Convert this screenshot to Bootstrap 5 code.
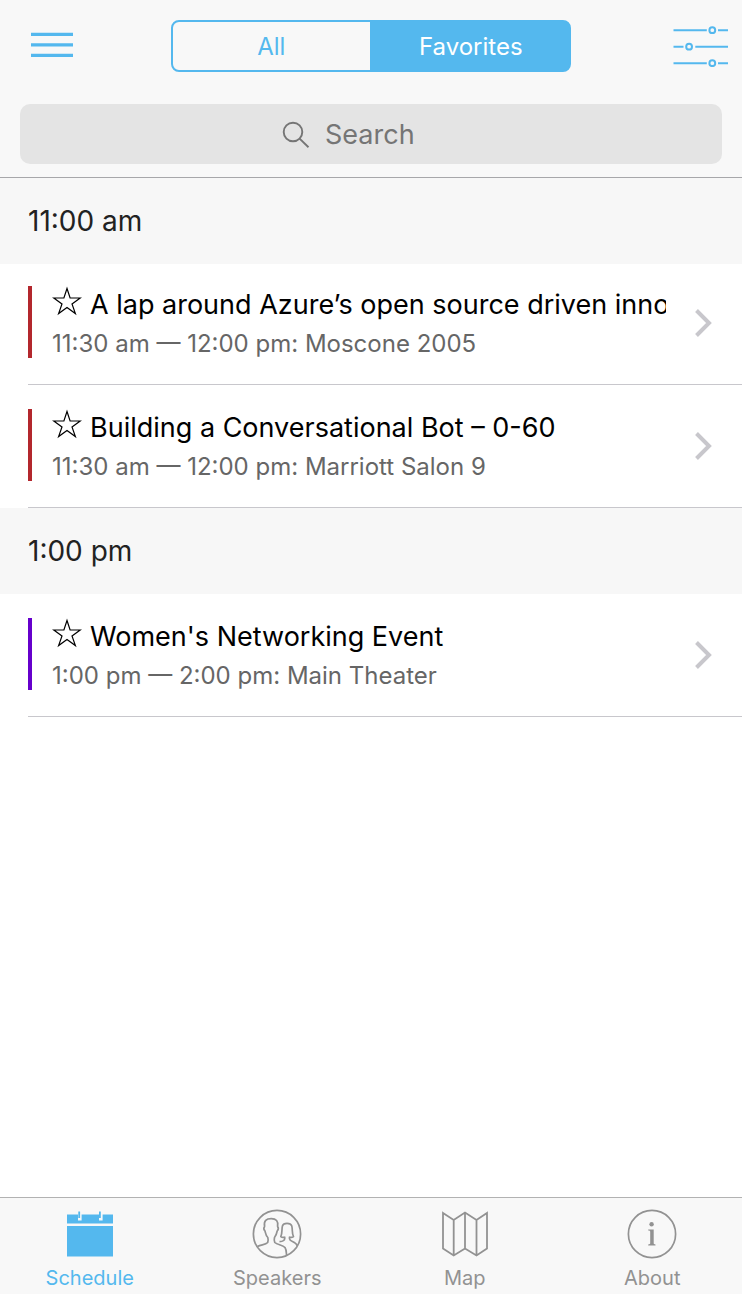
<!DOCTYPE html>
<html lang="en">
<head>
<meta charset="utf-8">
<meta name="viewport" content="width=device-width, initial-scale=1">
<title>Conference Schedule</title>
<link href="https://cdn.jsdelivr.net/npm/bootstrap@5.3.0/dist/css/bootstrap.min.css" rel="stylesheet">
<style>
  :root { --accent: #54b8ee; --bar: #f8f8f8; --icon-grey: #929292; }
  body { font-family: Inter, "Liberation Sans", sans-serif; color: #000; }
  svg { display: block; flex: none; }
  .topbar { background: var(--bar); border-bottom: 1px solid #a7a7aa; padding: 20px 20px 13px; margin-bottom: -2px; z-index: 3; }
  .toolbar { display: grid; grid-template-columns: 1fr 400px 1fr; margin-bottom: 32px; }
  .toolbar .btn { color: var(--accent); }
  .icon-menu { margin-left: 11px; }
  .icon-filter { margin-right: -6px; }
  .segments { height: 52px; }
  .segments .btn { --bs-btn-color: var(--accent); --bs-btn-border-color: var(--accent); --bs-btn-border-width: 2px;
    --bs-btn-active-bg: var(--accent); --bs-btn-active-border-color: var(--accent); --bs-btn-active-color: #fff;
    --bs-btn-border-radius: 8px; font-size: 24px; line-height: 28px; padding: 11px 0 9px; flex: 1 1 0; }
  .segments .btn-check:checked + .btn { color: #fff; }
  .searchbox .form-control { height: 60px; border: 0; border-radius: 10px; background: #e4e4e4; font-size: 27px; padding: 0 12px 0 calc(50% - 46px); color: #000; }
  .searchbox .form-control::placeholder { color: #757575; opacity: 1; }
  .searchbox svg { position: absolute; left: calc(50% - 90px); top: 16px; pointer-events: none; }
  .divider { position: sticky; top: 2px; z-index: 2; background: #f7f7f7; color: #222; font-size: 28px; line-height: 36px; padding: 25px 28px; font-weight: 400; }
  .sessions { padding-left: 28px; }
  .session { color: #000; padding: 24px 30px 24px 0; border-bottom: 1px solid #c8c7cc; }
  .session-text { border-left: 4px solid #b3272d; padding-left: 20px; height: 72px; margin: 0 28px 2px 0; }
  .session-text.social { border-color: #6600cc; }
  .session-title { font-size: 27px; line-height: 38px; gap: 8px; }
  .session-meta { font-size: 24px; line-height: 32px; color: #666; padding-top: 4px; }
  .tabs { background: var(--bar); border-top: 1px solid #b2b2b2; }
  .tabs .nav { margin: 0 -4px; }
  .tabs .nav-link { color: var(--icon-grey); font-size: 20px; line-height: 24px; padding: 11px 0 4px; gap: 7px; }
  .tabs .nav-link.active { color: var(--accent); }
</style>
</head>
<body class="vh-100 d-flex flex-column overflow-hidden bg-white">

<svg width="0" height="0" class="position-absolute" aria-hidden="true">
  <symbol id="star" viewBox="0 0 30 30"><path d="M15 2.5 18.1 12H28.2L20 17.9 23.4 27.6 15 21.6 6.6 27.6 10 17.9 1.8 12H11.9Z" fill="none" stroke="#000" stroke-width="1.2"/></symbol>
  <symbol id="chevron" viewBox="0 0 18 28"><path d="M2.5 1.5 15 14 2.5 26.5" fill="none" stroke="#c8c7cc" stroke-width="4"/></symbol>
</svg>

<header class="topbar position-relative">
  <div class="toolbar align-items-center">
    <button type="button" class="btn border-0 p-0 icon-menu text-start" aria-label="Menu">
      <svg width="42" height="28" viewBox="0 0 42 28" fill="currentColor"><path d="M0 .7h42v3.300H0zM0 11.200h42v3.300H0zM0 21.700h42v3.300H0z"/></svg>
    </button>
    <div class="btn-group segments" role="group" aria-label="Sessions shown">
      <input type="radio" class="btn-check" name="segment" id="seg-all">
      <label class="btn" for="seg-all">All</label>
      <input type="radio" class="btn-check" name="segment" id="seg-fav" checked>
      <label class="btn" for="seg-fav">Favorites</label>
    </div>
    <button type="button" class="btn border-0 p-0 icon-filter d-flex justify-content-end" aria-label="Filter">
      <svg width="55" height="42" viewBox="0 0 55 42" fill="none" stroke="currentColor" stroke-width="2"><path d="M.5 5.200h33.300M45 5.200h10M.5 21.700h10M22.300 21.700H55M.5 38.200h33.300M45 38.200h10"/><circle cx="39.300" cy="5.200" r="2.900"/><circle cx="16.100" cy="21.700" r="2.900"/><circle cx="39.300" cy="38.200" r="2.900"/></svg>
    </button>
  </div>
  <div class="searchbox position-relative">
    <svg width="30" height="30" viewBox="0 0 30 30" fill="none" stroke="#757575" stroke-width="1.9"><circle cx="12" cy="12" r="9.3"/><path d="M18.6 18.6 27.5 27.2"/></svg>
    <input type="search" class="form-control shadow-none" placeholder="Search" aria-label="Search">
  </div>
</header>

<main class="flex-grow-1 overflow-auto">
  <section>
    <h2 class="divider m-0">11:00 am</h2>
    <div class="sessions">
      <a href="#azure" class="session d-flex align-items-center text-decoration-none">
        <div class="session-text flex-grow-1 overflow-hidden">
          <div class="session-title d-flex text-nowrap"><svg width="30" height="30"><use href="#star"/></svg><span>A lap around Azure’s open source driven inno</span></div>
          <div class="session-meta">11:30 am — 12:00 pm: Moscone 2005</div>
        </div>
        <svg width="18" height="28"><use href="#chevron"/></svg>
      </a>
      <a href="#bot" class="session d-flex align-items-center text-decoration-none">
        <div class="session-text flex-grow-1 overflow-hidden">
          <div class="session-title d-flex text-nowrap"><svg width="30" height="30"><use href="#star"/></svg><span>Building a Conversational Bot – 0-60</span></div>
          <div class="session-meta">11:30 am — 12:00 pm: Marriott Salon 9</div>
        </div>
        <svg width="18" height="28"><use href="#chevron"/></svg>
      </a>
    </div>
  </section>
  <section>
    <h2 class="divider m-0">1:00 pm</h2>
    <div class="sessions">
      <a href="#networking" class="session d-flex align-items-center text-decoration-none">
        <div class="session-text social flex-grow-1 overflow-hidden">
          <div class="session-title d-flex text-nowrap"><svg width="30" height="30"><use href="#star"/></svg><span>Women's Networking Event</span></div>
          <div class="session-meta">1:00 pm — 2:00 pm: Main Theater</div>
        </div>
        <svg width="18" height="28"><use href="#chevron"/></svg>
      </a>
    </div>
  </section>
</main>

<footer class="tabs">
  <nav class="nav nav-fill flex-nowrap" aria-label="Main">
    <a class="nav-link active d-flex flex-column align-items-center w-25" href="#schedule" aria-current="page">
      <svg width="50" height="50" viewBox="0 0 50 50"><path d="M2 5.5H48V14.5H2ZM2 17H48V47.5H2Z" fill="currentColor"/><path d="M13 4h3.600v7.500H13zM34 4h3.600v7.500H34z" fill="#f8f8f8"/><path d="M13.300 2.500h1.800v6.500h-1.800zM34 2.500h1.800v6.500H34z" fill="currentColor"/></svg>
      Schedule
    </a>
    <a class="nav-link d-flex flex-column align-items-center w-25" href="#speakers">
      <svg width="50" height="50" viewBox="0 0 50 50" fill="none" stroke="currentColor" stroke-width="1.7" stroke-linejoin="round"><circle cx="25" cy="25" r="23.600"/><path d="M5.500 37.500C9 35.500 13.500 36 15.700 33.500 16.500 32 16.200 30 15.800 28.500 13.700 26.500 13.600 24.500 13 22 11.600 20.500 11.800 18.500 12.600 17.500 11.500 11.500 14.500 9.700 19.200 9.700 24.200 9.700 26.500 12 25.600 17.500 26.600 18.800 26.300 20.700 25.200 22 24.700 24.500 24.300 26.500 22.500 28.500 22 30.500 22 32 22.800 33.500 25.500 36 30.500 35.500 33 38.500 34.500 40.800 34.300 43.500 34.500 46"/><path d="M27.500 32.700C29.500 32.500 32.500 32 32.700 29.700V28.200C31.300 28.600 29.700 28.400 28.800 27.600 30.500 24.500 29.500 20 30.500 16.800 31.500 13.500 38.500 13.500 39.700 16.800 40.800 20 39.700 24.500 41.500 27.600 40.500 28.400 39 28.600 37.500 28.200V29.700C37.800 33.200 43.500 31.500 45.500 37"/></svg>
      Speakers
    </a>
    <a class="nav-link d-flex flex-column align-items-center w-25" href="#map">
      <svg width="50" height="50" viewBox="0 0 50 50" fill="none" stroke="currentColor" stroke-width="1.800"><path d="M3 4 13.700 11 25 3.500 36.500 11 47 4V39.500L36.500 46.500 25 39.500 13.700 46.500 3 39.500ZM13.700 11V46.500M25 3.500V39.500M36.500 11V46.500"/></svg>
      Map
    </a>
    <a class="nav-link d-flex flex-column align-items-center w-25" href="#about">
      <svg width="50" height="50" viewBox="0 0 50 50"><circle cx="25" cy="25" r="23.600" fill="none" stroke="currentColor" stroke-width="1.700"/><circle cx="24.600" cy="15.200" r="2.200" fill="currentColor"/><path d="M21.200 20.500H26.700V34.300C26.700 35.100 27.300 35.300 28.500 35.500V36.500H21.200V35.500C22.500 35.300 23.200 35.100 23.200 34.300V22.800C23.200 21.800 22.500 21.600 21.200 21.500Z" fill="currentColor"/></svg>
      About
    </a>
  </nav>
</footer>

<script src="https://cdn.jsdelivr.net/npm/bootstrap@5.3.0/dist/js/bootstrap.bundle.min.js"></script>
</body>
</html>
